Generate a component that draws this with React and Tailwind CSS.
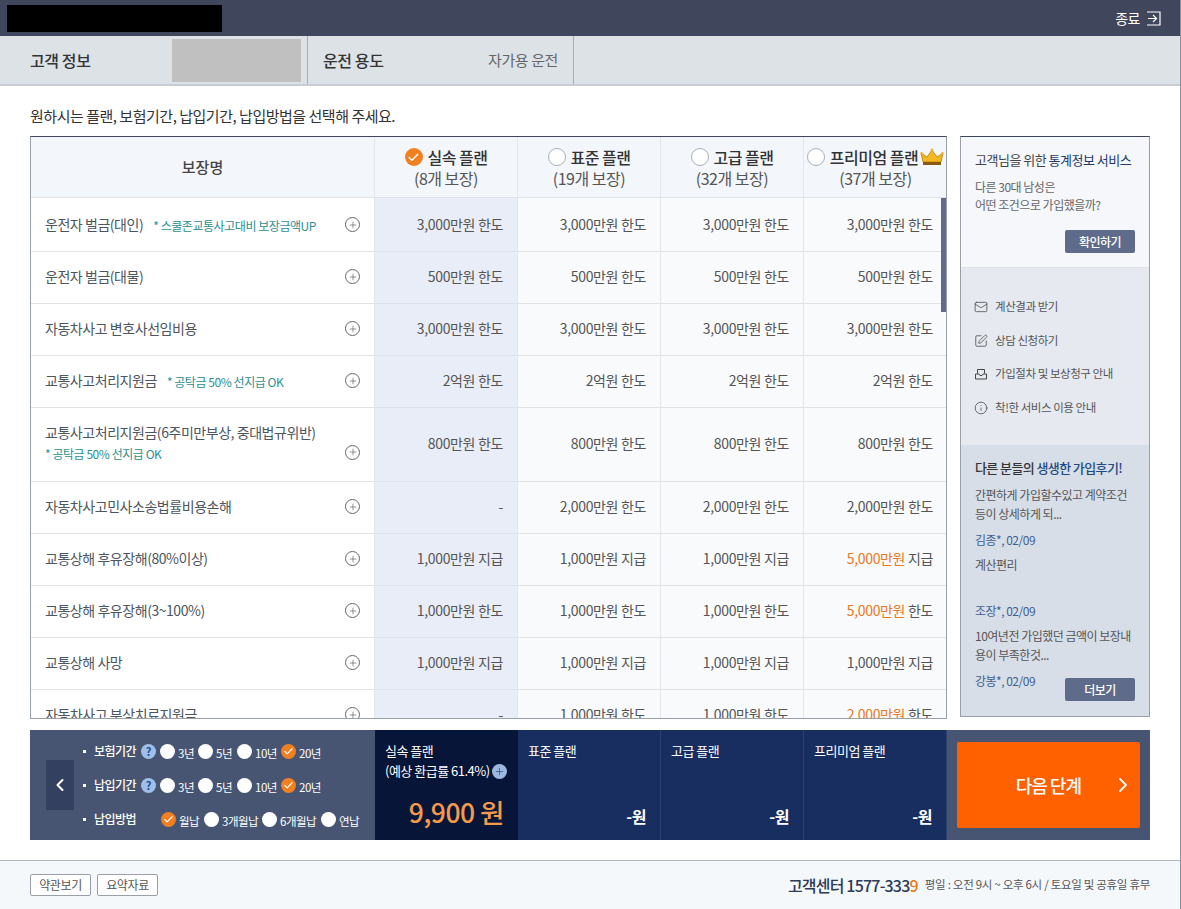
import { Mail, SquarePen, Info, ChevronLeft, ChevronRight, Check, Plus } from "lucide-react";

const rows = [
  { name: "운전자 벌금(대인)", note: "* 스쿨존교통사고대비 보장금액UP", h: "h-[54px]", first: true, v: ["3,000만원 한도", "3,000만원 한도", "3,000만원 한도", "3,000만원 한도"] },
  { name: "운전자 벌금(대물)", h: "h-[52px]", v: ["500만원 한도", "500만원 한도", "500만원 한도", "500만원 한도"] },
  { name: "자동차사고 변호사선임비용", h: "h-[52px]", v: ["3,000만원 한도", "3,000만원 한도", "3,000만원 한도", "3,000만원 한도"] },
  { name: "교통사고처리지원금", note: "* 공탁금 50% 선지급 OK", h: "h-[52px]", v: ["2억원 한도", "2억원 한도", "2억원 한도", "2억원 한도"] },
  { name: "교통사고처리지원금(6주미만부상, 중대법규위반)", sub: "* 공탁금 50% 선지급 OK", h: "h-[74px]", v: ["800만원 한도", "800만원 한도", "800만원 한도", "800만원 한도"] },
  { name: "자동차사고민사소송법률비용손해", h: "h-[52px]", v: ["-", "2,000만원 한도", "2,000만원 한도", "2,000만원 한도"] },
  { name: "교통상해 후유장해(80%이상)", h: "h-[52px]", v: ["1,000만원 지급", "1,000만원 지급", "1,000만원 지급", "5,000만원 지급"], hot: true },
  { name: "교통상해 후유장해(3~100%)", h: "h-[52px]", v: ["1,000만원 한도", "1,000만원 한도", "1,000만원 한도", "5,000만원 한도"], hot: true },
  { name: "교통상해 사망", h: "h-[52px]", v: ["1,000만원 지급", "1,000만원 지급", "1,000만원 지급", "1,000만원 지급"] },
  { name: "자동차사고 부상치료지원금", h: "h-[52px]", v: ["-", "1,000만원 한도", "1,000만원 한도", "2,000만원 한도"], hot: true },
];

const plans = [
  { name: "실속 플랜", count: "(8개 보장)", on: true },
  { name: "표준 플랜", count: "(19개 보장)" },
  { name: "고급 플랜", count: "(32개 보장)" },
  { name: "프리미엄 플랜", count: "(37개 보장)", crown: true },
];

function Radio({ on, big }) {
  const size = big ? "w-[18px] h-[18px]" : "w-[15px] h-[15px]";
  if (on) {
    return (
      <span className={`${size} shrink-0 rounded-full bg-[#f08020] flex items-center justify-center`}>
        <Check size={big ? 13 : 11} strokeWidth={2.5} className="text-white" />
      </span>
    );
  }
  return <span className={`${size} shrink-0 rounded-full bg-white ${big ? "border border-[#aab0b8]" : ""}`} />;
}

function Crown() {
  return (
    <svg width="24" height="18" viewBox="0 0 24 18" className="shrink-0 -ml-[3px]">
      <path d="M3 14 L1 5 L7 9 L12 2 L17 9 L23 5 L21 14 Z" fill="#f5b81f" stroke="#b87a10" strokeWidth="0.8" />
      <rect x="3" y="14" width="18" height="3" fill="#8a5a14" />
      <circle cx="12" cy="2" r="1.4" fill="#f5b81f" />
      <circle cx="1.5" cy="5" r="1.2" fill="#f5b81f" />
      <circle cx="22.5" cy="5" r="1.2" fill="#f5b81f" />
    </svg>
  );
}

function PlusCircle() {
  return (
    <span className="w-[15px] h-[15px] shrink-0 rounded-full border border-[#666] flex items-center justify-center">
      <Plus size={10} strokeWidth={1.5} className="text-[#555]" />
    </span>
  );
}

function Amount({ text, hot }) {
  if (hot && (text.startsWith("5,000만원") || text.startsWith("2,000만원"))) {
    return <span className="whitespace-pre"><span className="text-[#e8791e]">{text.slice(0, 7)}</span>{text.slice(7)}</span>;
  }
  return text;
}

function Option({ label, on, w }) {
  return (
    <span className={`flex items-center gap-[3px] ${w}`}>
      <Radio on={on} />
      <span className="mt-[5px] text-[11.5px] text-white tracking-[-0.5px] whitespace-nowrap">{label}</span>
    </span>
  );
}

function OptionRow({ label, help, opts }) {
  return (
    <div className="flex items-center h-[34px]">
      <span className="w-[3px] h-[3px] bg-white mr-[8px] ml-[1px]" />
      <span className="w-[47px] text-[12px] font-medium text-white tracking-[-0.5px] whitespace-nowrap">{label}</span>
      <span className="w-[19px] flex">
        {help && <span className="w-[15px] h-[15px] rounded-full bg-[#9dbfea] text-[#2f4a80] text-[11px] font-bold flex items-center justify-center">?</span>}
      </span>
      <div className="flex items-center">
        {opts.map((o) => <Option key={o.label} {...o} />)}
      </div>
    </div>
  );
}

const terms = [
  { label: "3년", w: "w-[38px]" },
  { label: "5년", w: "w-[39px]" },
  { label: "10년", w: "w-[44px]" },
  { label: "20년", w: "w-[40px]", on: true },
];

export default function App() {
  return (
    <div className="w-[1181px] h-[909px] overflow-hidden flex flex-col bg-white border-r border-[#8a909c] text-[#555] font-['Noto_Sans_CJK_KR','Noto_Sans',sans-serif]">
      {/* top bar */}
      <header className="h-[36px] shrink-0 bg-[#40465b] flex items-center justify-between pl-[7px] pr-[19px]">
        <div className="w-[215px] h-[27px] bg-black" />
        <div className="flex items-center gap-[6px] text-white text-[14px] tracking-[-0.5px]">
          종료
          <svg width="15" height="15" viewBox="0 0 15 15" fill="none" stroke="white" strokeWidth="1.2">
            <path d="M1 1H14V14H1" />
            <path d="M2 7.5H10M7 4L10.5 7.5L7 11" />
          </svg>
        </div>
      </header>

      {/* customer info */}
      <div className="h-[50px] shrink-0 bg-[#dde2e7] border-b-2 border-[#c8cdd4] flex text-[16px] tracking-[-0.4px]">
        <div className="w-[308px] flex items-center border-r border-[#a8aeb8] pl-[30px]">
          <span className="w-[142px] font-medium text-[#333]">고객 정보</span>
          <div className="w-[129px] h-[43px] bg-[#c0c0c0]" />
        </div>
        <div className="w-[266px] flex items-center justify-between border-r border-[#a8aeb8] pl-[15px] pr-[15px]">
          <span className="font-medium text-[#333]">운전 용도</span>
          <span className="text-[15px] text-[#666]">자가용 운전</span>
        </div>
      </div>

      <p className="mt-[19px] ml-[30px] h-[22px] text-[15px] leading-[22px] text-[#333] tracking-[-0.48px]">
        원하시는 플랜, 보험기간, 납입기간, 납입방법을 선택해 주세요.
      </p>

      <div className="mt-[9px] mx-[30px] flex items-start gap-[13px]">
        {/* coverage table */}
        <div className="relative w-[917px] h-[583px] shrink-0 overflow-hidden border border-[#9aa0aa] border-t-[#40465b]">
          <div className="h-[61px] flex bg-[#f3f6fa] border-b border-[#dfe3e8]">
            <div className="w-[344px] shrink-0 flex items-center justify-center text-[15px] font-medium text-[#444] border-r border-[#e3e6ea]">보장명</div>
            {plans.map((p) => (
              <div key={p.name} className="w-[143px] shrink-0 flex flex-col items-center justify-center border-r border-[#e3e6ea] last:border-r-0">
                <div className="flex items-center gap-[5px] text-[16px] leading-[21px] font-medium text-[#333] tracking-[-0.5px] whitespace-nowrap">
                  <Radio on={p.on} big />
                  {p.name}
                  {p.crown && <Crown />}
                </div>
                <div className="text-[16px] leading-[20px] text-[#555] tracking-[-0.5px]">{p.count}</div>
              </div>
            ))}
          </div>
          {rows.map((r) => (
            <div key={r.name} className={`flex ${r.h} border-b border-[#dfe3e8] text-[14px]`}>
              <div className={`w-[344px] shrink-0 flex items-center justify-between pl-[14px] pr-[14px] border-r border-[#e3e6ea] bg-white ${r.first || r.sub ? "" : "pb-[2px]"}`}>
                {r.sub ? (
                  <div className="flex flex-col gap-[2.5px] mb-[4px]">
                    <span className="tracking-[-0.45px] text-[#4c5560]">{r.name}</span>
                    <span className="text-[12px] text-[#2d8f8f] tracking-[-0.45px]">{r.sub}</span>
                  </div>
                ) : (
                  <div className="flex items-center gap-[10px]">
                    <span className="tracking-[-0.45px] text-[#4c5560]">{r.name}</span>
                    {r.note && <span className="mt-[2px] text-[12px] text-[#2d8f8f] tracking-[-0.45px]">{r.note}</span>}
                  </div>
                )}
                <span className={r.sub ? "mt-[15px]" : ""}><PlusCircle /></span>
              </div>
              {r.v.map((v, i) => (
                <div
                  key={i}
                  className={`w-[143px] shrink-0 flex items-center justify-end pr-[14px] tracking-[-0.35px] text-[#555] border-r border-[#e3e6ea] last:border-r-0 ${r.first ? "" : "pb-[2px]"} ${i === 0 ? "bg-[#e8edf7]" : "bg-[#f8fafc]"}`}
                >
                  <Amount text={v} hot={r.hot && i === 3} />
                </div>
              ))}
            </div>
          ))}
          {/* scrollbar */}
          <div className="absolute right-0 top-[61px] w-[5px] h-[114px] bg-[#5f6b8a]" />
        </div>

        {/* side panel */}
        <aside className="w-[190px] h-[581px] shrink-0 flex flex-col border border-[#9aa0aa] border-t-[#40465b] text-[12px] tracking-[-0.5px]">
          <div className="h-[131px] shrink-0 pl-[14px] pr-[14px] pt-[14px] bg-[#f5f7fa] border-b border-[#dfe3e8] flex flex-col">
            <div className="text-[13px] leading-[18px] text-[#444]">
              고객님을 위한 <span className="text-[#1f3a6a]">통계정보 서비스</span>
            </div>
            <div className="mt-[9px] leading-[18px] text-[#666]">
              다른 30대 남성은<br />어떤 조건으로 가입했을까?
            </div>
            <button className="self-end mt-[16px] w-[70px] h-[23px] rounded-[2px] bg-[#5f6b8a] text-white text-[12px] font-medium">확인하기</button>
          </div>
          <div className="h-[177px] shrink-0 bg-[#e6eaf0] pl-[13px] pt-[30px] flex flex-col gap-[15.5px] text-[11.5px] tracking-[-0.45px] text-[#555]">
            <div className="h-[18px] flex items-center gap-[7px]"><Mail size={14} strokeWidth={1.3} className="text-[#444]" />계산결과 받기</div>
            <div className="h-[18px] flex items-center gap-[7px]"><SquarePen size={14} strokeWidth={1.3} className="text-[#444]" />상담 신청하기</div>
            <div className="h-[18px] flex items-center gap-[7px]">
              <svg width="14" height="14" viewBox="0 0 14 14" fill="none" stroke="#444" strokeWidth="1">
                <path d="M3.5 6.5V2.5H10.5V6.5" />
                <path d="M1.5 7H5L6 8.5H8L9 7H12.5V12H1.5Z" />
              </svg>
              가입절차 및 보상청구 안내
            </div>
            <div className="h-[18px] flex items-center gap-[7px]"><Info size={14} strokeWidth={1.3} className="text-[#444]" />착!한 서비스 이용 안내</div>
          </div>
          <div className="flex-1 bg-[#d7deE8] pl-[14px] pr-[14px] pt-[13px] leading-[20px] text-[#555]">
            <div className="text-[13px] font-medium text-[#333] tracking-[-0.6px]">
              다른 분들의 <span className="text-[#1f4a80]">생생한 가입후기!</span>
            </div>
            <p className="mt-[7px] leading-[19px] whitespace-nowrap">간편하게 가입할수있고 계약조건<br />등이 상세하게 되...</p>
            <p className="mt-[7px] text-[#3f5f8f]">김종*, 02/09</p>
            <p className="mt-[5px]">계산편리</p>
            <p className="mt-[26px] text-[#3f5f8f]">조장*, 02/09</p>
            <p className="mt-[5px] leading-[19px] whitespace-nowrap">10여년전 가입했던 금액이 보장내<br />용이 부족한것...</p>
            <div className="mt-[7px] flex items-start justify-between">
              <span className="text-[#3f5f8f]">강봉*, 02/09</span>
              <button className="mt-[7px] w-[70px] h-[23px] rounded-[2px] bg-[#5f6b8a] text-white text-[12px] font-medium">더보기</button>
            </div>
          </div>
        </aside>
      </div>

      {/* bottom price bar */}
      <div className="mt-[11px] mx-[30px] w-[1120px] h-[110px] shrink-0 flex bg-[#475572]">
        <div className="w-[345px] shrink-0 flex items-center pl-[16px]">
          <button className="w-[28px] h-[50px] bg-[#34405f] flex items-center justify-center mr-[8px]">
            <ChevronLeft size={20} strokeWidth={2.5} className="text-white" />
          </button>
          <div className="flex flex-col">
            <OptionRow label="보험기간" help opts={terms} />
            <OptionRow label="납입기간" help opts={terms} />
            <OptionRow
              label="납입방법"
              opts={[
                { label: "월납", on: true, w: "w-[43px] ml-[1px]" },
                { label: "3개월납", w: "w-[58px]" },
                { label: "6개월납", w: "w-[59px]" },
                { label: "연납", w: "w-[38px]" },
              ]}
            />
          </div>
        </div>
        <div className="w-[143px] shrink-0 bg-[#071538] pl-[10px] pr-[14px] pt-[11px] flex flex-col text-white text-[13px] leading-[20px] tracking-[-0.5px]">
          <span>실속 플랜</span>
          <span className="flex items-center gap-[2px] whitespace-nowrap">
            (예상 환급률 61.4%)
            <span className="w-[15px] h-[15px] shrink-0 rounded-full bg-[#9db8de] flex items-center justify-center">
              <Plus size={11} strokeWidth={1.5} className="text-[#2f4a80]" />
            </span>
          </span>
          <span className="mt-[14px] self-end text-[26.5px] leading-[34px] font-medium text-[#f39a4c] tracking-[-0.5px]">9,900 원</span>
        </div>
        {["표준 플랜", "고급 플랜", "프리미엄 플랜"].map((n) => (
          <div key={n} className="w-[143px] shrink-0 bg-[#182e60] border-r border-[#2e4272] last:border-r-0 pl-[10px] pr-[14px] pt-[11px] pb-[12px] flex flex-col justify-between text-white">
            <span className="text-[13px] leading-[20px] tracking-[-0.5px]">{n}</span>
            <span className="self-end text-[16px] font-bold tracking-[-0.5px]">-원</span>
          </div>
        ))}
        <div className="flex-1 pl-[10px] pr-[10px] py-[12px]">
          <button className="w-full h-full rounded-[2px] bg-[#ff6000] text-white text-[18px] font-medium tracking-[-1px] flex items-center justify-end pr-[5px] gap-[30px]">
            다음 단계
            <ChevronRight size={24} strokeWidth={1.8} />
          </button>
        </div>
      </div>

      {/* footer */}
      <footer className="mt-[20px] flex-1 bg-[#f5f8fb] border-t border-[#b5bac2] flex items-center justify-between pl-[30px] pr-[30px] pb-[1px]">
        <div className="flex gap-[6px]">
          <button className="w-[61px] h-[22px] rounded-[2px] border border-[#9aa0aa] bg-white text-[12px] text-[#555] tracking-[-0.4px]">약관보기</button>
          <button className="w-[61px] h-[22px] rounded-[2px] border border-[#9aa0aa] bg-white text-[12px] text-[#555] tracking-[-0.4px]">요약자료</button>
        </div>
        <div className="flex items-center gap-[7px]">
          <span className="text-[16px] font-medium text-[#2b3a55] tracking-[-0.8px]">고객센터 1577-333<span className="text-[#e8791e]">9</span></span>
          <span className="text-[11.5px] text-[#555] tracking-[-0.3px]">평일 : 오전 9시 ~ 오후 6시 / 토요일 및 공휴일 휴무</span>
        </div>
      </footer>
    </div>
  );
}
